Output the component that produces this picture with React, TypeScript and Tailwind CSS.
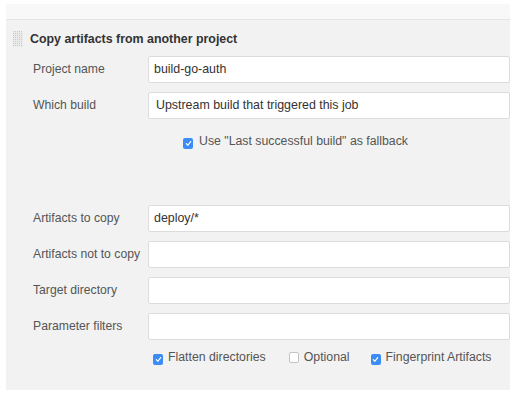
import React from 'react';

function Check({ checked }: { checked: boolean }) {
  return checked ? (
    <span className="inline-flex items-center justify-center w-[10px] h-[11px] rounded-[2px] bg-[#3b8cf7] shrink-0">
      <svg width="7" height="7" viewBox="0 0 8 8">
        <path d="M1.5 4.2 L3.3 6 L6.5 1.8" fill="none" stroke="white" strokeWidth="1.4" strokeLinecap="round" strokeLinejoin="round" />
      </svg>
    </span>
  ) : (
    <span className="inline-block w-[10px] h-[11px] rounded-[2px] bg-white border border-[#c4c4c4] shrink-0" />
  );
}

function Handle() {
  const dots = [];
  for (let r = 0; r < 8; r++) {
    for (let c = 0; c < 5; c++) {
      dots.push(<rect key={`${r}-${c}`} x={c * 2} y={r * 2} width="1" height="1" fill="#c9c9c9" />);
    }
  }
  return (
    <svg width="10" height="16" viewBox="0 0 10 16" className="bg-[#ebebeb]">
      {dots}
    </svg>
  );
}

function Row({ label, value, select, className }: { label: string; value?: string; select?: boolean; className?: string }) {
  return (
    <div className={`flex items-center h-[27px] ${className ?? ''}`}>
      <div className="w-[115px] pl-[27px] box-content text-[12.2px] text-[#555]">{label}</div>
      <div
        className={`ml-auto w-[362px] h-[27px] bg-white border border-[#dcdcdc] rounded-[2px] flex items-center text-[#333] text-[12.4px] ${
          select ? 'pl-[7px]' : 'pl-[5px]'
        }`}
      >
        {value}
      </div>
    </div>
  );
}

export default function App() {
  return (
    <div className="w-[516px] h-[397px] bg-white font-['Liberation_Sans',Arial,sans-serif] overflow-hidden">
      <div className="ml-[6px] mt-[4px] w-[504px] h-[16px] bg-[#f8f8f8] border-b border-[#e4e4e4]" />
      <div className="ml-[6px] w-[504px] h-[370px] bg-[#f2f2f2] pt-[11px]">
        <div className="flex items-center h-[16px] pl-[7px]">
          <Handle />
          <span className="ml-[7px] text-[12.4px] font-bold text-[#333]">Copy artifacts from another project</span>
        </div>
        <Row label="Project name" value="build-go-auth" className="mt-[9px]" />
        <Row label="Which build" value="Upstream build that triggered this job" select className="mt-[9px]" />
        <div className="flex items-center mt-[14px] pl-[177px] h-[16px] gap-[6px] text-[12.3px] text-[#555]">
          <span className="mt-[4px]"><Check checked /></span>
          <span>Use "Last successful build" as fallback</span>
        </div>
        <Row label="Artifacts to copy" value="deploy/*" className="mt-[56px]" />
        <Row label="Artifacts not to copy" className="mt-[9px]" />
        <Row label="Target directory" className="mt-[9px]" />
        <Row label="Parameter filters" className="mt-[9px]" />
        <div className="flex items-center mt-[9px] pl-[147px] h-[16px] text-[12.3px] text-[#555]">
          <span className="mt-[4px]"><Check checked /></span>
          <span className="ml-[5px]">Flatten directories</span>
          <span className="mt-[4px] ml-[23px]"><Check checked={false} /></span>
          <span className="ml-[5px]">Optional</span>
          <span className="mt-[4px] ml-[21px]"><Check checked /></span>
          <span className="ml-[5px]">Fingerprint Artifacts</span>
        </div>
      </div>
    </div>
  );
}
